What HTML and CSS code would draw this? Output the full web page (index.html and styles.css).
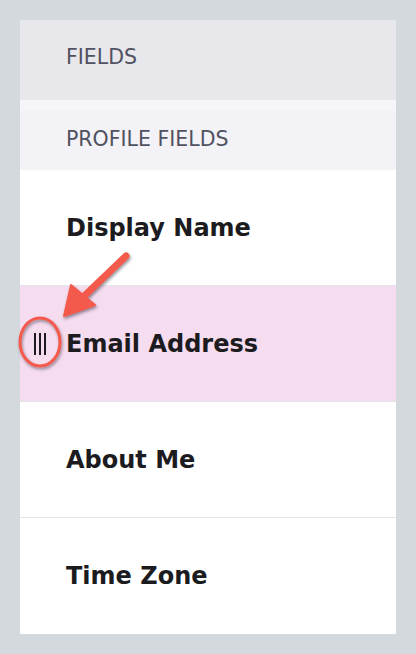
FILE: index.html
```html
<!DOCTYPE html>
<html>
<head>
<meta charset="utf-8">
<link rel="stylesheet" href="styles.css">
</head>
<body>
<div class="card">
  <div class="section section-top">FIELDS</div>
  <div class="section section-sub">PROFILE FIELDS</div>
  <div class="row">Display Name</div>
  <div class="row row-active">
    <span class="handle"><i></i><i></i><i></i></span>
    Email Address
  </div>
  <div class="row">About Me</div>
  <div class="row row-last">Time Zone</div>
</div>
<svg class="annotation" width="416" height="654" viewBox="0 0 416 654">
  <defs>
    <filter id="sh" x="-20%" y="-20%" width="140%" height="140%">
      <feDropShadow dx="1" dy="2" stdDeviation="1.6" flood-color="#3a3a48" flood-opacity="0.55"/>
    </filter>
  </defs>
  <g filter="url(#sh)">
    <line x1="126" y1="256" x2="80" y2="300" stroke="#f45a4c" stroke-width="7" stroke-linecap="round"/>
    <polygon points="64,316 71,285 95,305" fill="#f45a4c" stroke="#f45a4c" stroke-width="2" stroke-linejoin="round"/>
    <ellipse cx="40" cy="342" rx="20" ry="24" fill="none" stroke="#f45a4c" stroke-width="3"/>
  </g>
</svg>
</body>
</html>
```
FILE: styles.css
```css
html, body {
  margin: 0;
  padding: 0;
}
body {
  background: #d4d9dd;
  width: 416px;
  height: 654px;
  padding: 20px;
  box-sizing: border-box;
  position: relative;
  font-family: "DejaVu Sans", "Noto Sans", sans-serif;
}
.card {
  background: #ffffff;
  display: flex;
  flex-direction: column;
}
.section {
  display: flex;
  align-items: center;
  padding-left: 46px;
  font-size: 20.5px;
  color: #51515f;
  box-sizing: border-box;
}
.section-top {
  height: 80px;
  background: #e8e7ec;
  padding-bottom: 6px;
}
.section-sub {
  height: 70px;
  background: linear-gradient(#f6f6fa 0, #f6f6fa 10px, #f2f2f7 10px);
  padding-top: 8px;
}
.row {
  height: 116px;
  box-sizing: border-box;
  border-bottom: 1px solid #e1e5e9;
  display: flex;
  align-items: center;
  padding-left: 46px;
  font-size: 24px;
  font-weight: 700;
  color: #1b1b20;
  position: relative;
}
.row-active {
  background: #f6dcef;
}
.row-last {
  border-bottom: none;
}
.handle {
  position: absolute;
  left: 14px;
  top: 47px;
  height: 22px;
  display: flex;
  gap: 3px;
}
.handle i {
  display: block;
  width: 2px;
  height: 22px;
  background: #1b1b20;
}
.annotation {
  position: absolute;
  left: 0;
  top: 0;
  pointer-events: none;
}
```
